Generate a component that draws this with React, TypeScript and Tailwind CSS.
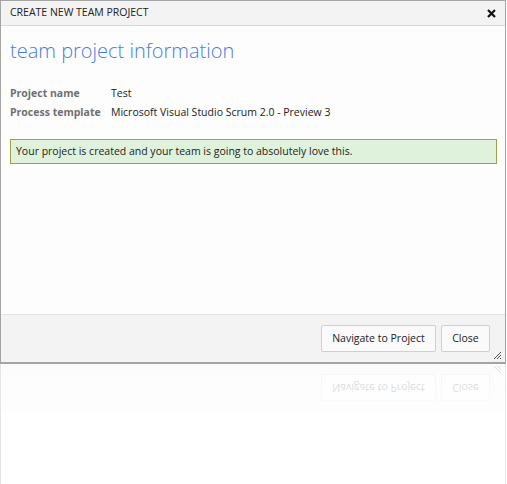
import React from "react";

const FONT = { fontFamily: '"Segoe UI", "Open Sans", "Noto Sans", sans-serif' };

function Grip({ className = "" }: { className?: string }) {
  return (
    <svg width="10" height="10" viewBox="0 0 10 10" className={className}>
      <path d="M9 2 L2 9 M9 5 L5 9 M9 8 L8 9" stroke="#555" strokeWidth="1" />
    </svg>
  );
}

function Footer({ ghost = false }: { ghost?: boolean }) {
  return (
    <div className="relative flex h-[48px] items-center justify-end gap-[5px] border-t border-[#e4e4e4] bg-[#f3f3f3] pr-[15px]">
      <button className="h-[27px] w-[115px] rounded-[2px] border border-[#cfcfcf] bg-[#fafafa] text-[10.5px] text-[#222]">
        Navigate to Project
      </button>
      <button className="h-[27px] w-[49px] rounded-[2px] border border-[#cfcfcf] bg-[#fafafa] text-[10.5px] text-[#222]">
        Close
      </button>
      <Grip className={ghost ? "absolute bottom-[1px] right-[3px]" : "absolute bottom-[2px] right-[3px]"} />
    </div>
  );
}

export default function App() {
  return (
    <div className="relative h-[484px] w-[507px] overflow-hidden bg-white" style={FONT}>
      <div className="flex h-[364px] w-[506px] flex-col border border-b-2 border-[#a4a4a4] bg-white">
        <div className="flex h-[25px] items-center justify-between border-b border-[#d9d9d9] bg-[#f3f3f3] pl-[9px] pr-[9px]">
          <span className="text-[10.5px] text-[#222]">CREATE NEW TEAM PROJECT</span>
          <svg width="9" height="9" viewBox="0 0 9 9">
            <path d="M1 1 L8 8 M8 1 L1 8" stroke="#111" strokeWidth="2.2" />
          </svg>
        </div>
        <div className="flex-1 bg-[#fdfdfd] px-[9px]">
          <h1 className="mt-[11px] text-[20px] font-light leading-[28px] text-[#4580db]">
            team project information
          </h1>
          <div className="mt-[20px] grid grid-cols-[101px_1fr] gap-y-[3px] text-[10.5px] leading-[16px]">
            <span className="font-bold text-[#707070]">Project name</span>
            <span className="text-[#222]">Test</span>
            <span className="font-bold text-[#707070]">Process template</span>
            <span className="text-[#222]">Microsoft Visual Studio Scrum 2.0 - Preview 3</span>
          </div>
          <div className="mt-[19px] mr-[-1px] flex h-[25px] items-center border border-[#a0a046] bg-[#dff2dc] px-[5px] text-[10.5px] text-[#222]">
            Your project is created and your team is going to absolutely love this.
          </div>
        </div>
        <Footer />
      </div>
      <div className="relative w-[506px] border-x border-[#e6e6e6]">
        <div className="-scale-y-100 opacity-30">
          <Footer ghost />
        </div>
        <div className="h-[72px]" />
        <div className="pointer-events-none absolute inset-0 bg-gradient-to-b from-white/30 via-white/75 to-white" />
      </div>
    </div>
  );
}
